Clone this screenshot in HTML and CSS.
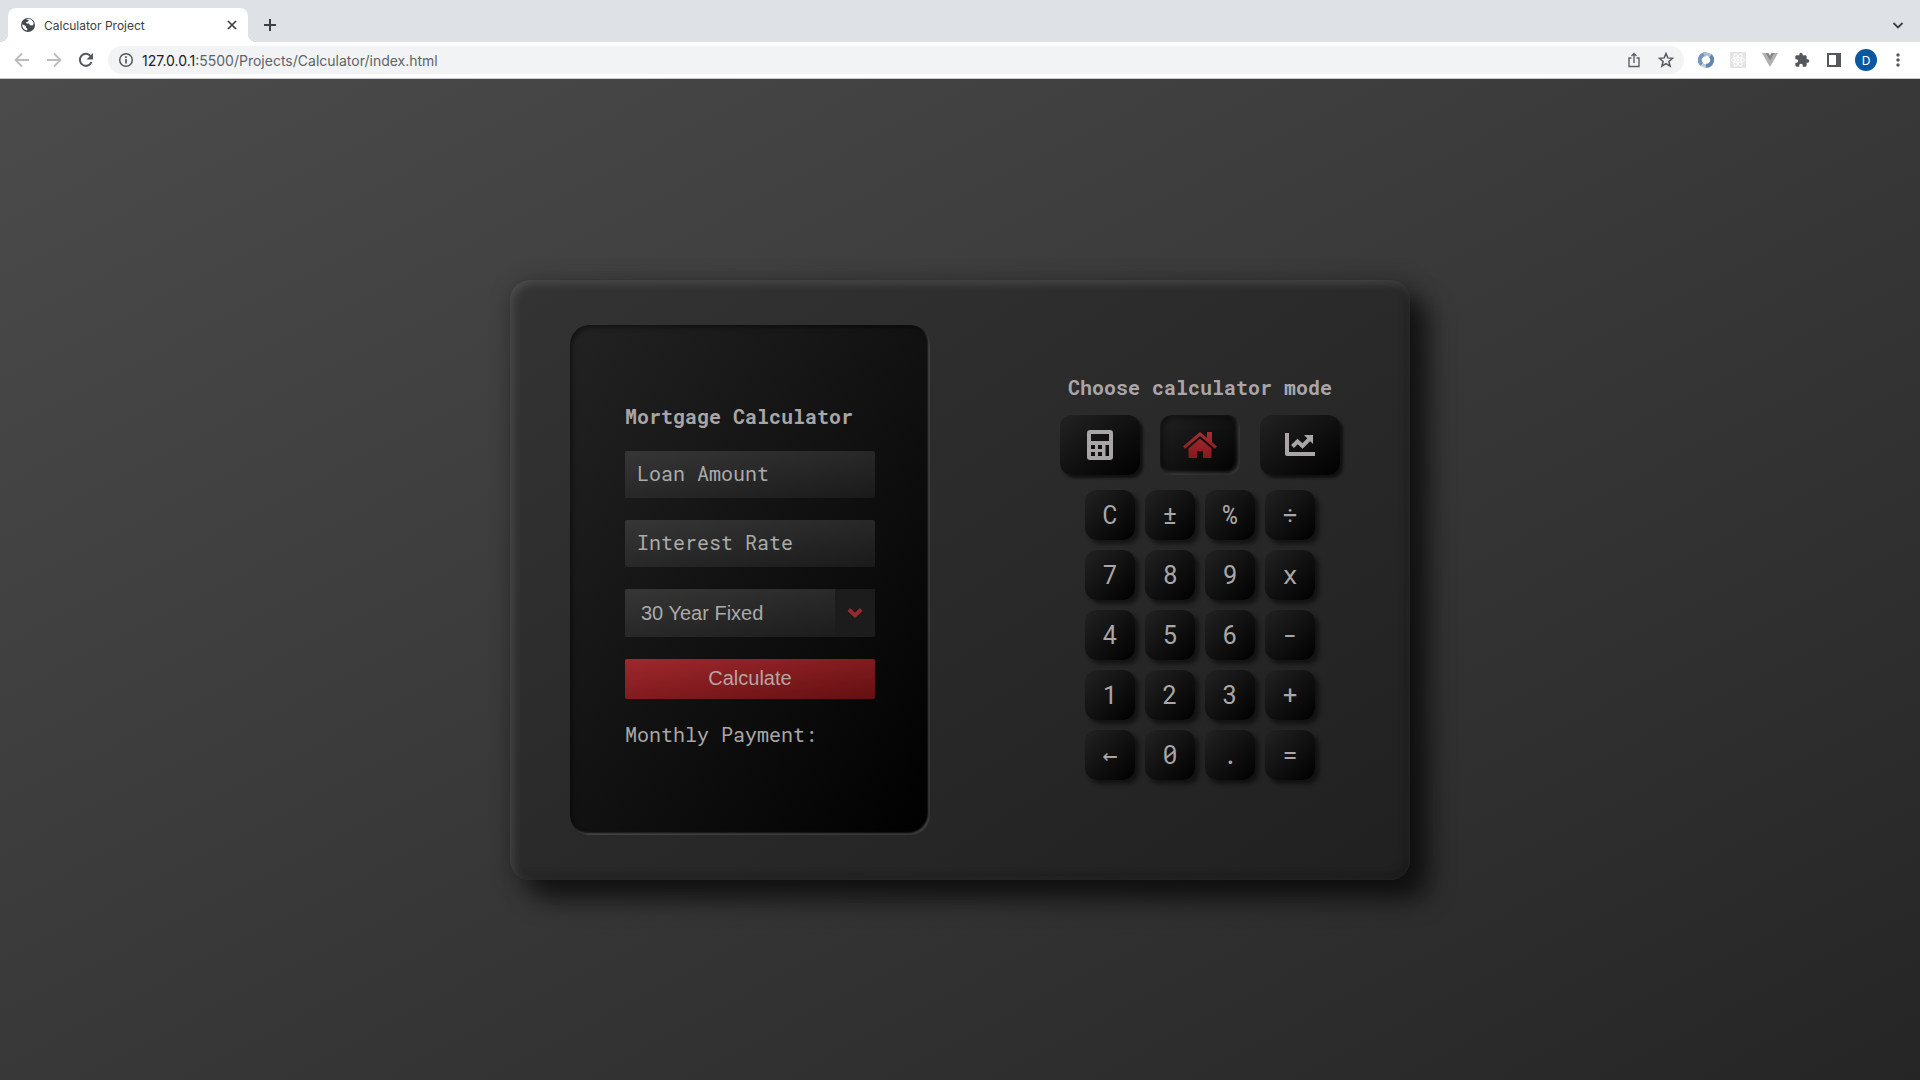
FILE: index.html
```html
<!DOCTYPE html>
<html lang="en">
<head>
<meta charset="utf-8">
<title>Calculator Project</title>
<link rel="stylesheet" href="styles.css">
</head>
<body>
<header class="browser">
  <div class="tabs">
    <div class="tab">
      <svg class="icon" viewBox="0 0 16 16"><circle cx="8" cy="8" r="7" fill="#45494e"/><path d="M2.2 7.2l3.6 1.8v1.6l1.4 1v1.8C4 13 2 10.500 2.200 7.200zM6 2.500l2.200-.7c3 .2 5.200 2.400 5.600 5l-1.200 1.600-2.400-.2-1.400-1.600H6.600L6 5.200l2-.6L8.800 3z" fill="#fff"/></svg>
      <span class="tab-title">Calculator Project</span>
      <button class="plain" aria-label="Close tab"><svg class="icon" viewBox="0 0 16 16"><path d="M4 4l8 8M12 4l-8 8" stroke="#3c4043" stroke-width="1.700"/></svg></button>
    </div>
    <button class="plain new-tab" aria-label="New tab"><svg class="icon" viewBox="0 0 16 16"><path d="M8 2v12M2 8h12" stroke="#3c4043" stroke-width="2"/></svg></button>
    <button class="plain tab-search" aria-label="Search tabs"><svg class="icon" viewBox="0 0 16 16"><path d="M3.500 6L8 10.500 12.500 6" fill="none" stroke="#3c4043" stroke-width="1.800"/></svg></button>
  </div>
  <div class="toolbar">
    <nav class="nav">
      <button class="plain" aria-label="Back"><svg class="icon" viewBox="0 0 16 16"><path d="M15 8H2M8 1.500L1.500 8 8 14.500" fill="none" stroke="#babcbe" stroke-width="1.800"/></svg></button>
      <button class="plain" aria-label="Forward"><svg class="icon" viewBox="0 0 16 16"><path d="M1 8h13M8 1.500L14.500 8 8 14.500" fill="none" stroke="#babcbe" stroke-width="1.800"/></svg></button>
      <button class="plain" aria-label="Reload"><svg class="icon" viewBox="0 0 16 16"><path d="M13.500 10A6 6 0 1 1 12.500 4" fill="none" stroke="#54585d" stroke-width="2"/><path d="M15 1v6.500H8.500z" fill="#54585d"/></svg></button>
    </nav>
    <div class="address">
      <svg class="icon" viewBox="0 0 16 16"><circle cx="8" cy="8" r="6.300" fill="none" stroke="#54585d" stroke-width="1.500"/><path d="M8 7v4.500M8 4.300v1.600" stroke="#54585d" stroke-width="1.700"/></svg>
      <span class="url"><b>127.0.0.1</b>:5500/Projects/Calculator/index.html</span>
      <button class="plain" aria-label="Share"><svg class="icon" viewBox="0 0 16 16"><path d="M5.500 6H3v8.500h10V6h-2.500M8 11V2M5.500 4L8 1.500 10.500 4" fill="none" stroke="#5f6368" stroke-width="1.400"/></svg></button>
      <button class="plain" aria-label="Bookmark"><svg class="icon" viewBox="0 0 16 16"><path d="M8 1.500l1.800 4.400 4.800.4-3.700 3.100 1.200 4.700L8 11.600l-4.100 2.500 1.200-4.700-3.700-3.100 4.800-.4z" fill="none" stroke="#54585d" stroke-width="1.500"/></svg></button>
    </div>
    <div class="extensions">
      <button class="plain" aria-label="JSON viewer"><svg class="icon" viewBox="0 0 16 16"><path d="M8 2.200A5.800 5.800 0 0 0 4 12.500" fill="none" stroke="#7598bd" stroke-width="4"/><path d="M4 12.500A5.800 5.800 0 0 0 10 13.500" fill="none" stroke="#b9cbdf" stroke-width="3.500"/><path d="M8 13.800A5.800 5.800 0 0 0 12 3.500" fill="none" stroke="#5f87b1" stroke-width="4"/><path d="M12.500 4A5.800 5.800 0 0 0 6 2.500" fill="none" stroke="#a9c0d8" stroke-width="3.500"/></svg></button>
      <button class="plain" aria-label="React developer tools"><svg class="icon" viewBox="0 0 16 16"><path fill="#e4e4e4" d="M0 0h16v16H0z"/><g fill="none" stroke="#fff"><ellipse cx="8" cy="8" rx="6.500" ry="2.500"/><ellipse cx="8" cy="8" rx="6.500" ry="2.500" transform="rotate(60 8 8)"/><ellipse cx="8" cy="8" rx="6.500" ry="2.500" transform="rotate(120 8 8)"/></g><circle cx="8" cy="8" r="1.300" fill="#fff"/></svg></button>
      <button class="plain" aria-label="Vue developer tools"><svg class="icon" viewBox="0 0 16 16"><path d="M0 1h3.500L8 9l4.500-8H16L8 15z" fill="#b0b0b0"/><path d="M3.500 1h3L8 3.700 9.500 1h3L8 9z" fill="#858585"/></svg></button>
      <button class="plain" aria-label="Extensions"><svg class="icon" viewBox="0 0 24 24"><path d="M20.500 11H19V7c0-1.100-.9-2-2-2h-4V3.500a2.500 2.500 0 0 0-5 0V5H4c-1.100 0-2 .9-2 2v3.800h1.500a2.700 2.700 0 0 1 0 5.400H2V20c0 1.100.9 2 2 2h3.800v-1.500a2.700 2.700 0 0 1 5.400 0V22H17c1.100 0 2-.9 2-2v-4h1.500a2.500 2.500 0 0 0 0-5z" fill="#54585d"/></svg></button>
      <button class="plain" aria-label="Side panel"><svg class="icon" viewBox="0 0 16 16"><path fill-rule="evenodd" d="M1 1h14v14H1zM3 3v10h7V3z" fill="#54585d"/></svg></button>
      <button class="avatar">D</button>
      <button class="plain" aria-label="Menu"><svg class="icon" viewBox="0 0 16 16" fill="#54585d"><circle cx="8" cy="3" r="1.700"/><circle cx="8" cy="8" r="1.700"/><circle cx="8" cy="13" r="1.700"/></svg></button>
    </div>
  </div>
</header>
<main class="page">
  <section class="calculator">
    <form class="screen">
      <h1 class="title">Mortgage Calculator</h1>
      <input class="field" type="text" placeholder="Loan Amount" aria-label="Loan Amount">
      <input class="field" type="text" placeholder="Interest Rate" aria-label="Interest Rate">
      <div class="select">
        <select class="term" aria-label="Loan term"><option>30 Year Fixed</option><option>15 Year Fixed</option></select>
        <span class="arrow"><svg class="icon" viewBox="0 0 16 16"><path d="M1.800 4.500L8 10.300l6.200-5.800" fill="none" stroke="#982a2e" stroke-width="3.800"/></svg></span>
      </div>
      <button class="submit" type="button">Calculate</button>
      <p class="result">Monthly Payment:</p>
    </form>
    <div class="controls">
      <h2 class="title">Choose calculator mode</h2>
      <div class="modes">
        <button class="mode" aria-label="Standard"><svg viewBox="0 0 26 30"><path fill="#aaa6a7" fill-rule="evenodd" d="M3 0h20a3 3 0 0 1 3 3v24a3 3 0 0 1-3 3H3a3 3 0 0 1-3-3V3a3 3 0 0 1 3-3zM4 4v7h18V4zM4 15v4h4v-4zM11 15v4h4v-4zM4 22v4h4v-4zM11 22v4h4v-4zM18.500 15v11H22V15z"/></svg></button>
        <button class="mode active" aria-label="Mortgage"><svg viewBox="0 0 34 30"><defs><linearGradient id="red" x1="0" y1="0" x2="0" y2="1"><stop offset="0" stop-color="#a82d31"/><stop offset="1" stop-color="#84191d"/></linearGradient></defs><path fill="url(#red)" d="M17 2l7 6V2h5v10.300l5 4.300-2 2.200L17 6 2 18.800l-2-2.200zM17 8.700l11.500 9.800V28H20v-7h-6v7H5.500v-9.500z"/></svg></button>
        <button class="mode" aria-label="Investment"><svg viewBox="0 0 30 30"><path fill="none" stroke="#aaa6a7" stroke-width="4" stroke-linejoin="round" d="M2 3v21h28"/><path fill="none" stroke="#aaa6a7" stroke-width="4" d="M7.500 16.500l5-5 5 4.500 7-7"/><path fill="#aaa6a7" d="M19 5h9v9z"/></svg></button>
      </div>
      <div class="keys">
        <button class="key">C</button><button class="key">±</button><button class="key">%</button><button class="key">÷</button>
        <button class="key">7</button><button class="key">8</button><button class="key">9</button><button class="key">x</button>
        <button class="key">4</button><button class="key">5</button><button class="key">6</button><button class="key">-</button>
        <button class="key">1</button><button class="key">2</button><button class="key">3</button><button class="key">+</button>
        <button class="key">←</button><button class="key">0</button><button class="key">.</button><button class="key">=</button>
      </div>
    </div>
  </section>
</main>
</body>
</html>
```
FILE: styles.css
```css
* { box-sizing: border-box; }
body {
  margin: 0;
  min-height: 100vh;
  display: flex;
  flex-direction: column;
  font-family: "Liberation Sans", Arial, sans-serif;
}
button { border: 0; padding: 0; color: inherit; font-family: inherit; }
.icon { width: 16px; height: 16px; display: block; flex: none; }
.plain { background: none; }

/* Browser bar */
.browser { border-bottom: 1px solid #c6c8ca; background: #fff; font-family: Inter, Roboto, sans-serif; }
.tabs { display: flex; align-items: flex-end; height: 42px; padding: 0 14px 0 8px; background: #dee1e6; }
.tab {
  position: relative;
  display: flex;
  align-items: center;
  width: 240px;
  height: 34px;
  padding: 0 8px 0 12px;
  gap: 8px;
  background: #fff;
  border-radius: 8px 8px 0 0;
}
.tab::before, .tab::after {
  content: "";
  position: absolute;
  bottom: 0;
  width: 8px;
  height: 8px;
}
.tab::before { left: -8px; background: radial-gradient(circle at 0 0, transparent 8px, #fff 8px); }
.tab::after { right: -8px; background: radial-gradient(circle at 100% 0, transparent 8px, #fff 8px); }
.tab-title { flex: 1; font-size: 12px; color: #3c4043; }
.new-tab { margin: 0 auto 9px 14px; }
.tab-search { margin-bottom: 9px; }
.toolbar { display: flex; align-items: center; height: 36px; padding: 0 14px; }
.nav { display: flex; gap: 16px; margin-right: 14px; }
.address {
  flex: 1;
  display: flex;
  align-items: center;
  gap: 16px;
  height: 28px;
  padding: 0 10px;
  border-radius: 14px;
  background: #f1f3f4;
}
.url { flex: 1; margin-left: -8px; font-size: 14px; color: #5f6368; }
.url b { font-weight: 400; color: #202124; }
.extensions { display: flex; align-items: center; gap: 16px; margin-left: 14px; }
.avatar {
  width: 22px;
  height: 22px;
  margin: 0 -3px;
  border-radius: 50%;
  background: #0b57a0;
  color: #fff;
  font-size: 12px;
}

/* Page */
.page {
  flex: 1;
  display: flex;
  align-items: center;
  justify-content: center;
  background: linear-gradient(to bottom right, #4b4b4b, #252525);
  color: #aaa6a7;
}
.calculator {
  display: flex;
  width: 100%;
  max-width: 900px;
  min-height: 600px;
  padding: 45px 60px;
  border-radius: 20px;
  background: linear-gradient(to bottom right, #333, #202020);
  box-shadow: 20px 20px 25px rgba(0, 0, 0, .55), 5px 5px 25px rgba(0, 0, 0, .4),
    inset 3px 3px 10px rgba(255, 255, 255, .15), inset -3px -3px 10px rgba(0, 0, 0, .3);
}
.title, .result, .field, .key { font-family: "Roboto Mono", "DejaVu Sans Mono", monospace; }
.title, .result { margin: 0; font-size: 20px; line-height: 26px; }
.screen {
  display: flex;
  flex-direction: column;
  gap: 22px;
  width: 360px;
  padding: 78px 55px;
  border-radius: 20px;
  background: linear-gradient(to bottom right, #222, #000);
  box-shadow: inset 2px 2px 5px rgba(0, 0, 0, .5), inset -2px -2px 2px rgba(255, 255, 255, .25);
}
.field, .select {
  width: 100%;
  height: 47px;
  border: 0;
  border-radius: 2px;
  background: linear-gradient(to bottom right, #363636, #1a1a1a);
}
.field { padding: 0 12px 2px; font-size: 20px; color: #aaa; }
.field::placeholder { color: #aaa; opacity: 1; }
.select { display: flex; height: 48px; }
.term {
  flex: 1;
  appearance: none;
  padding: 0 16px;
  border: 0;
  background: none;
  color: #aaa;
  font: 20px "Liberation Sans", Arial, sans-serif;
}
.arrow {
  display: grid;
  place-items: center;
  width: 40px;
  border-radius: 0 2px 2px 0;
  background: #1c1c1c;
  pointer-events: none;
}
.submit {
  height: 40px;
  border-radius: 2px;
  background: linear-gradient(to bottom right, #a0282c, #640f11);
  color: #b5a5a5;
  font-size: 20px;
}
.controls {
  flex: 1;
  display: flex;
  flex-direction: column;
  align-items: center;
  margin-left: 120px;
  padding-top: 49px;
}
.modes { display: flex; gap: 20px; margin: 15px 0; }
.mode, .key {
  border-radius: 12px;
  background: linear-gradient(to bottom right, #222, #000);
  box-shadow: 3px 3px 3px rgba(0, 0, 0, .6);
}
.mode { display: grid; place-items: center; width: 80px; height: 60px; }
.mode svg { height: 30px; display: block; }
.mode.active {
  box-shadow: inset 3px 3px 6px rgba(0, 0, 0, .5), inset -2px -2px 4px rgba(255, 255, 255, .25);
}
.keys { display: grid; grid-template-columns: repeat(4, 50px); gap: 10px; }
.key { height: 50px; font-size: 25px; box-shadow: 4px 4px 4px rgba(0, 0, 0, .5); }
```
